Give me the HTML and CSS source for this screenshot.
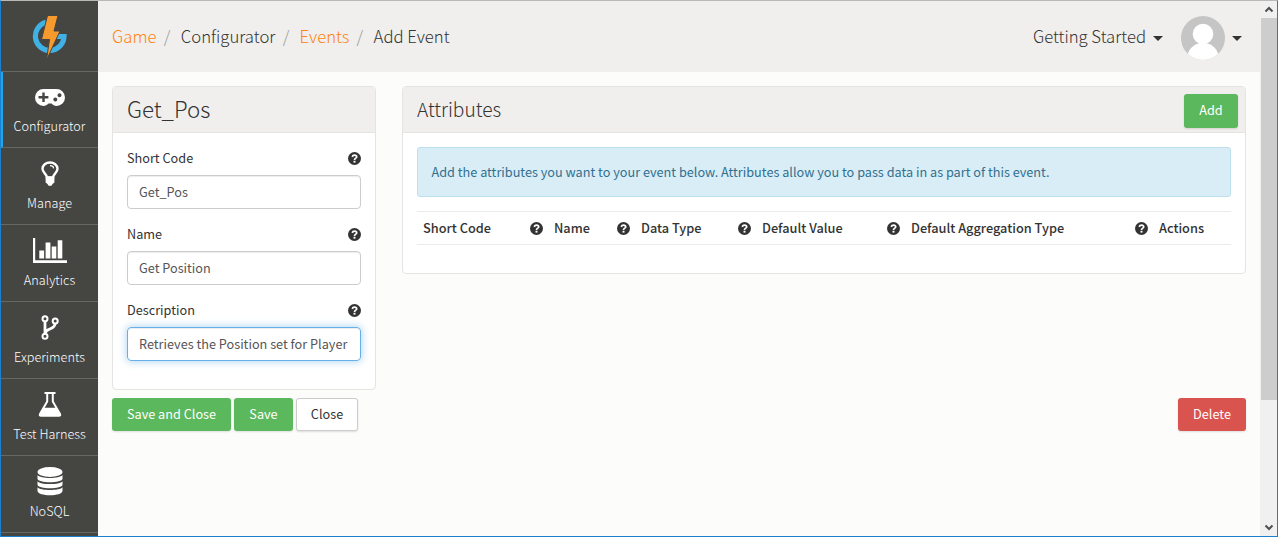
FILE: index.html
```html
<!DOCTYPE html>
<html lang="en">
<head>
<meta charset="utf-8">
<title>Add Event</title>
<link rel="stylesheet" href="styles.css">
</head>
<body>
<svg class="defs" width="0" height="0">
  <symbol id="help" viewBox="0 0 12 12"><circle cx="6" cy="6" r="6" fill="#333"/><path d="M3.900 4.500C4.300 3.300 5 2.900 6 2.900C7.300 2.900 8 3.600 8 4.500C8 5.700 6 5.700 6 7.400" fill="none" stroke="#fff" stroke-width="1.600"/><rect x="5.100" y="8.100" width="1.800" height="1.700" fill="#fff"/></symbol>
</svg>
<div class="window">
  <nav class="sidebar">
    <a class="logo">
      <svg width="36" height="46" viewBox="0 0 36 46"><path d="M14 7.300A14.300 14.300 0 1 0 32 21.500H25" fill="none" stroke="#40b1e5" stroke-width="5.200"/><path d="M15.500 0.500H26L22 16H28L14.500 45L17.500 24.500H9.500Z" fill="#f79a2d" stroke="#454542" stroke-width="1"/></svg>
    </a>
    <a class="item first active">
      <svg width="30" height="17" viewBox="0 0 30 17"><path fill="#fff" fill-rule="evenodd" d="M8.500 0h13a8.500 8.500 0 0 1 0 17c-2 0-3.500-1-5-2.500h-3C12 16 10.500 17 8.500 17a8.500 8.500 0 0 1 0-17ZM7.300 3.600v3.500H3.500v2.500h3.800v3.500h2.400V9.600h3.700V7.100H9.700V3.600ZM20.300 8.500a2 2 0 1 0 .01 0ZM24.500 4.300a2 2 0 1 0 .01 0Z"/></svg>
      <span>Configurator</span>
    </a>
    <a class="item">
      <svg width="18" height="25" viewBox="0 0 18 25"><path d="M6 16.500C6 13 1.500 12 1.500 7.800C1.500 4 5 1.500 9 1.500s7.500 2.500 7.500 6.300C16.500 12 12 13 12 16.500Z" fill="none" stroke="#fff" stroke-width="2.400"/><path d="M9 4.700c2 0 3.500 1 3.600 2.700" fill="none" stroke="#fff" stroke-width="1.200"/><path d="M4.600 15.500h8.800v6L11.500 23 10.500 24.800h-3L6.500 23l-1.900-1.500Z" fill="#fff"/></svg>
      <span>Manage</span>
    </a>
    <a class="item">
      <svg width="34" height="25" viewBox="0 0 34 25"><path fill="#fff" d="M0 0h2.200v22.200H34V25H0ZM6.300 12.500h4.800v8H6.300ZM12.600 4.500h4.800v16h-4.800ZM18.700 8.500h4.600v12h-4.600ZM24.700 2.300h4.600v18.200h-4.600Z"/></svg>
      <span>Analytics</span>
    </a>
    <a class="item">
      <svg width="18" height="25" viewBox="0 0 18 25" fill="none" stroke="#fff"><g stroke-width="2"><circle cx="4" cy="3.800" r="2.500"/><circle cx="4" cy="21.200" r="2.500"/><circle cx="14.200" cy="6" r="2.500"/></g><path stroke-width="2.800" d="M4 6v13M14.200 8.200C14.200 15 5 13 4.300 18"/></svg>
      <span>Experiments</span>
    </a>
    <a class="item">
      <svg width="24" height="25" viewBox="0 0 24 25"><path d="M6.500 1.100h11M9.200 1v8.500L2 22c-.700 1.400 0 1.800 1 1.800h18c1 0 1.700-.400 1-1.800L14.800 9.500V1" fill="none" stroke="#fff" stroke-width="2"/><path d="M6 15.800h12l4.500 8h-21Z" fill="#fff"/></svg>
      <span>Test Harness</span>
    </a>
    <a class="item">
      <svg width="26" height="29" viewBox="0 0 26 29"><g fill="#fff"><ellipse cx="13" cy="5" rx="12.500" ry="5"/><path d="M.500 8C3 12 23 12 25.500 8v3.500c0 5-25 5-25 0Z"/><path d="M.500 14.200C3 18 23 18 25.500 14.200v3.300c0 5-25 5-25 0Z"/><path d="M.500 20.300C3 24 23 24 25.500 20.300v3.500c0 6-25 6-25 0Z"/></g></svg>
      <span>NoSQL</span>
    </a>
  </nav>
  <div class="page">
    <header class="topbar">
      <div class="crumbs"><a>Game</a><i>/</i><span>Configurator</span><i>/</i><a>Events</a><i>/</i><span>Add Event</span></div>
      <div class="user">
        <span class="start">Getting Started</span><b class="caret"></b>
        <svg class="avatar" width="44" height="44" viewBox="0 0 44 44"><defs><clipPath id="round"><circle cx="22" cy="22" r="22"/></clipPath></defs><g clip-path="url(#round)"><rect width="44" height="44" fill="#c5c5c5"/><path d="M6 44C6 33 13 27 22 27s16 6 16 17Z" fill="#fff"/><circle cx="22" cy="18" r="10.300" fill="#fff"/></g></svg>
        <b class="caret"></b>
      </div>
    </header>
    <main class="content">
      <div class="columns">
        <section class="panel event">
          <h1>Get_Pos</h1>
          <div class="form">
            <div class="label"><label>Short Code</label><svg class="help"><use href="#help"/></svg></div>
            <div class="input">Get_Pos</div>
            <div class="label"><label>Name</label><svg class="help"><use href="#help"/></svg></div>
            <div class="input">Get Position</div>
            <div class="label"><label>Description</label><svg class="help"><use href="#help"/></svg></div>
            <div class="input focus">Retrieves the Position set for Player</div>
          </div>
        </section>
        <section class="panel attributes">
          <h2><span>Attributes</span><a class="btn green add">Add</a></h2>
          <div class="body">
            <div class="alert">Add the attributes you want to your event below. Attributes allow you to pass data in as part of this event.</div>
            <div class="thead">
              <div>Short Code<svg class="help"><use href="#help"/></svg></div>
              <div>Name<svg class="help"><use href="#help"/></svg></div>
              <div>Data Type<svg class="help"><use href="#help"/></svg></div>
              <div>Default Value<svg class="help"><use href="#help"/></svg></div>
              <div>Default Aggregation Type<svg class="help"><use href="#help"/></svg></div>
              <div>Actions</div>
            </div>
          </div>
        </section>
      </div>
      <div class="actions">
        <a class="btn green save-close">Save and Close</a>
        <a class="btn green save">Save</a>
        <a class="btn plain close">Close</a>
        <a class="btn red delete">Delete</a>
      </div>
    </main>
  </div>
  <div class="scrollbar">
    <svg width="16" height="17" viewBox="0 0 16 17"><path d="M4.500 10.500 8 7l3.500 3.500" fill="none" stroke="#505050" stroke-width="2"/></svg>
    <div class="thumb"></div>
    <svg class="down" width="16" height="17" viewBox="0 0 16 17"><path d="M4.500 6.500 8 10l3.500-3.500" fill="none" stroke="#505050" stroke-width="2"/></svg>
  </div>
</div>
</body>
</html>
```
FILE: styles.css
```css
* { box-sizing: border-box; }
body { margin: 0; font-family: "Noto Sans CJK SC", "Noto Sans", sans-serif; font-size: 12.69px; line-height: 18px; color: #333; overflow: hidden; }
.defs { display: block; }
.window { display: flex; width: 1278px; height: 537px; border: 1px solid #1a80d2; border-top-color: #bab9b8; background: #fcfcfa; overflow: hidden; }
.sidebar { width: 97px; flex: none; background: #454542; color: #fff; font-weight: 300; overflow: hidden; }
.logo { display: flex; height: 71px; border-bottom: 1px solid #666664; padding: 14px 0 0 31px; }
.item { display: flex; flex-direction: column; align-items: center; justify-content: space-between; height: 77px; padding: 13px 0 12px; border-bottom: 1px solid #666664; }
.item.first { height: 76px; padding-top: 17px; }
.item.active { border-left: 2px solid #1ca8e6; padding-right: 2px; }
.item:last-child { padding-top: 11px; }
.page { width: 1162px; flex: none; }
.topbar { display: flex; justify-content: space-between; align-items: center; height: 71px; padding: 0 18px 0 14px; background: #f0efed; font-weight: 300; font-size: 16.720px; }
.crumbs { display: flex; padding-bottom: 2px; }
.crumbs a { color: #ff8212; }
.crumbs i { font-style: normal; color: #999; margin: 0 10.400px 0 7.300px; }
.user { display: flex; align-items: center; }
.caret { border: 5px solid transparent; border-top-color: #333; border-bottom: 0; margin-top: 3px; }
.start { margin-right: 7px; padding-bottom: 2px; }
.avatar { margin: 2px 7px 0 18px; }
.content { padding: 14px 14px 0; }
.columns { display: flex; align-items: flex-start; gap: 26px; }
.panel { background: #fff; border: 1px solid #e4e4e2; border-radius: 4px; overflow: hidden; flex: none; }
.event { width: 264px; height: 304px; }
.attributes { width: 844px; height: 188px; }
h1, h2 { display: flex; align-items: center; justify-content: space-between; height: 46px; margin: 0; padding: 0 7px 2px 14px; background: #f0efed; border-bottom: 1px solid #e4e4e2; font-weight: 300; font-size: 22.300px; }
h1 { padding-bottom: 4px; }
h2 { font-size: 19.150px; }
.form { padding: 15px 14px; }
.label { display: flex; justify-content: space-between; align-items: center; height: 20px; margin-bottom: 7px; }
.help { width: 13px; height: 13px; flex: none; }
.input { height: 34px; line-height: 32px; padding: 0 11px; margin-bottom: 15px; border: 1px solid #ccc; border-radius: 4px; color: #555; white-space: nowrap; box-shadow: inset 0 1px 1px rgba(0,0,0,.075); }
.input.focus { border-color: #66afe9; box-shadow: inset 0 1px 1px rgba(0,0,0,.075), 0 0 8px rgba(102,175,233,.6); }
.btn { display: flex; align-items: center; justify-content: center; height: 33px; padding-bottom: 2px; border-radius: 3px; color: #fff; font-size: 12.690px; font-weight: 400; box-shadow: 0 1px 2px rgba(0,0,0,.12); }
.green { background: #5cb85c; }
.red { background: #d9534f; }
.plain { background: #fff; color: #333; border: 1px solid #ccc; }
.add { width: 54px; height: 34px; margin-top: 4px; }
.body { padding: 14px; }
.alert { height: 50px; padding: 0 13.500px; line-height: 48px; background: #d9edf7; border: 1px solid #bce0ee; border-radius: 3px; color: #31708f; white-space: nowrap; }
.thead { display: grid; grid-template-columns: 131px 87px 121px 149px 248px 78px; height: 34px; margin-top: 14px; border: solid #ebebeb; border-width: 1px 0; font-weight: 500; font-size: 12.750px; }
.thead div { display: flex; align-items: center; justify-content: space-between; padding: 0 5px 0 6px; white-space: nowrap; }
.actions { display: flex; gap: 3px; margin-top: 8px; }
.save-close { width: 119px; }
.save { width: 59px; }
.close { width: 62px; }
.delete { width: 68px; margin-left: auto; }
.scrollbar { display: flex; flex-direction: column; width: 17px; padding-left: 1px; background: #f0f0f0; }
.thumb { height: 382px; background: #cdcdcd; }
.down { margin-top: auto; }
```
